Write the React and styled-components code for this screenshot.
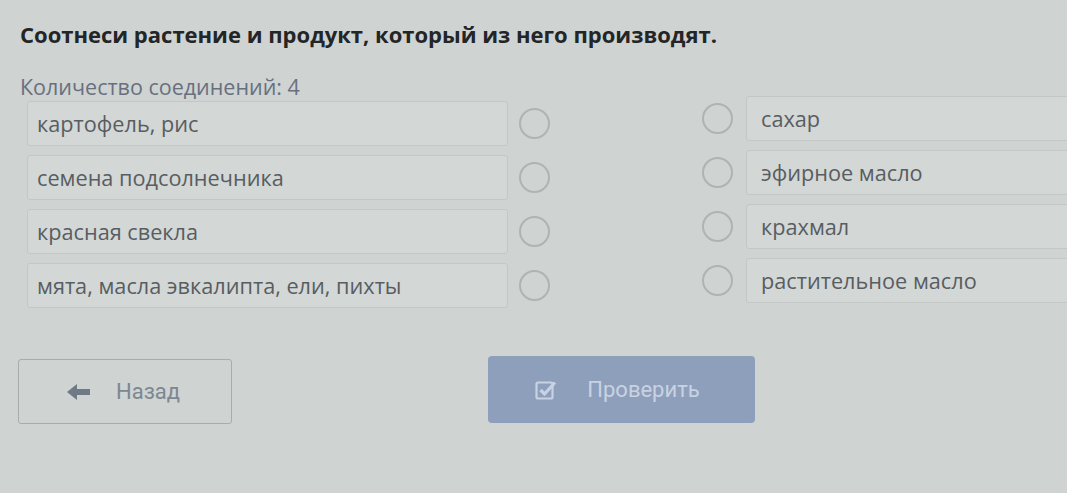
import React from "react";
import styled, { createGlobalStyle } from "styled-components";

const GlobalStyle = createGlobalStyle`
  html, body {
    margin: 0;
    padding: 0;
    background: #cfd3d2;
    overflow: hidden;
  }
  body {
    font-family: "Open Sans", "Noto Sans", sans-serif;
  }
`;

const StyledPage = styled.div`
  width: 1067px;
  height: 493px;
  padding: 20px 0 0 20px;
  box-sizing: border-box;
  display: flex;
  flex-direction: column;
`;

const StyledTitle = styled.div`
  font-size: 22px;
  font-weight: 700;
  color: #232526;
  line-height: 28px;
`;

const StyledCount = styled.div`
  margin-top: 25px;
  font-size: 21.5px;
  color: #687080;
  line-height: 28px;
`;

const StyledBoard = styled.div`
  display: flex;
  align-items: flex-start;
`;

const StyledColumn = styled.div`
  display: flex;
  flex-direction: column;
  gap: 9px;
  margin-left: ${(p) => p.$left}px;
  margin-top: ${(p) => p.$top || 0}px;
`;

const StyledRow = styled.div`
  display: flex;
  align-items: center;
  gap: ${(p) => p.$gap}px;
`;

const StyledItem = styled.div`
  width: ${(p) => p.$width}px;
  height: 45px;
  box-sizing: border-box;
  display: flex;
  align-items: center;
  padding-left: ${(p) => p.$pad}px;
  border: 1px solid #c3c7c6;
  border-radius: 3px;
  background: #d3d7d6;
  font-size: 21.7px;
  color: #585d61;
  white-space: nowrap;
`;

const StyledDot = styled.div`
  width: 27px;
  height: 27px;
  border: 2px solid #aeb3b3;
  border-radius: 50%;
  flex-shrink: 0;
`;

const StyledActions = styled.div`
  display: flex;
  align-items: center;
  margin-top: 51px;
`;

const StyledBack = styled.div`
  width: 214px;
  height: 65px;
  box-sizing: border-box;
  margin-left: -2px;
  border: 1px solid #a7acad;
  border-radius: 3px;
  display: flex;
  align-items: center;
  padding-left: 48px;
  gap: 25px;
  font-family: Roboto, "Noto Sans", sans-serif;
  font-size: 22px;
  color: #7c8792;
`;

const StyledCheck = styled.div`
  width: 267px;
  height: 67px;
  margin-left: 256px;
  margin-top: -4px;
  border-radius: 4px;
  background: #8e9fbc;
  display: flex;
  align-items: center;
  justify-content: center;
  gap: 30px;
  padding-right: 8px;
  box-sizing: border-box;
  font-family: Roboto, "Noto Sans", sans-serif;
  font-size: 22px;
  color: #c9d2e2;
`;

const left = [
  "картофель, рис",
  "семена подсолнечника",
  "красная свекла",
  "мята, масла эвкалипта, ели, пихты",
];

const right = ["сахар", "эфирное масло", "крахмал", "растительное масло"];

export default function App() {
  return (
    <>
      <GlobalStyle />
      <StyledPage>
        <StyledTitle>
          Соотнеси растение и продукт, который из него производят.
        </StyledTitle>
        <StyledCount>Количество соединений: 4</StyledCount>
        <StyledBoard>
          <StyledColumn $left={7}>
            {left.map((t) => (
              <StyledRow key={t} $gap={11}>
                <StyledItem $width={481} $pad={9}>
                  {t}
                </StyledItem>
                <StyledDot />
              </StyledRow>
            ))}
          </StyledColumn>
          <StyledColumn $left={152} $top={-5}>
            {right.map((t) => (
              <StyledRow key={t} $gap={13}>
                <StyledDot />
                <StyledItem $width={340} $pad={14}>
                  {t}
                </StyledItem>
              </StyledRow>
            ))}
          </StyledColumn>
        </StyledBoard>
        <StyledActions>
          <StyledBack>
            <svg width="24" height="16" viewBox="0 0 24 16">
              <path d="M0 8 L10 0 L10 5 L23 5 L23 11 L10 11 L10 16 Z" fill="#6f7a86" />
            </svg>
            Назад
          </StyledBack>
          <StyledCheck>
            <svg width="22" height="22" viewBox="0 0 22 22">
              <rect x="1.5" y="3.5" width="16" height="16" rx="1.5" fill="none" stroke="#c9d2e2" strokeWidth="2.2" />
              <path d="M5.5 11 L9.5 15 L20 3.5" fill="none" stroke="#c9d2e2" strokeWidth="3.2" />
            </svg>
            Проверить
          </StyledCheck>
        </StyledActions>
      </StyledPage>
    </>
  );
}
